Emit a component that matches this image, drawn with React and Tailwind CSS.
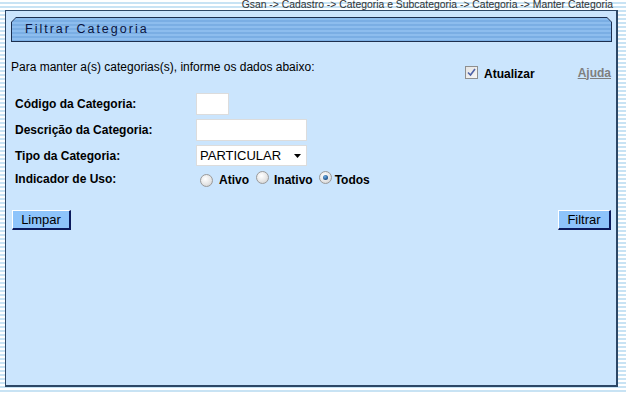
import React from "react";

function Radio({ checked }) {
  return (
    <span className="relative inline-block w-[13px] h-[13px] rounded-full border border-[#9a9a9a] bg-[radial-gradient(circle_at_40%_35%,#ffffff_0%,#e6e6e6_55%,#c9c9c9_100%)] shrink-0">
      {checked && (
        <span className="absolute left-[3px] top-[3px] w-[5px] h-[5px] rounded-full bg-[radial-gradient(circle_at_40%_35%,#6fb0e8_0%,#1d4f86_70%,#0d2c52_100%)]" />
      )}
    </span>
  );
}

export default function App() {
  return (
    <div
      className="w-[626px] h-[393px] overflow-hidden bg-[repeating-linear-gradient(to_bottom,#ffffff_0px,#ffffff_2px,#c8e3f4_2px,#c8e3f4_4px)] text-black"
      style={{ fontFamily: '"Liberation Sans", Arial, sans-serif' }}
    >
      <div className="h-[10px] flex justify-end pr-[13px] text-[10.4px] leading-[10px] text-[#333333] whitespace-nowrap">
        Gsan -&gt; Cadastro -&gt; Categoria e Subcategoria -&gt; Categoria -&gt; Manter Categoria
      </div>
      <div className="ml-[5px] w-[613px] h-[377px] bg-[#cbe5fd] border-l border-t border-r-2 border-b-2 border-[#2c4766] flex flex-col">
        {/* title bar */}
        <div className="ml-[5px] mt-[6px] w-[601px] h-[25px] bg-[#1c2f4f] [clip-path:polygon(5px_0,596px_0,601px_5px,601px_25px,0_25px,0_5px)] p-px">
          <div className="w-full h-full [clip-path:polygon(4px_0,595px_0,599px_4px,599px_23px,0_23px,0_4px)] bg-[repeating-linear-gradient(to_bottom,#8dbdee_0px,#8dbdee_2px,#7aaee4_2px,#7aaee4_4px)] flex items-center pl-[13px]">
            <span className="text-[12.5px] tracking-[2px] text-[#0a1440]">Filtrar Categoria</span>
          </div>
        </div>

        {/* intro row */}
        <div className="mt-[18px] h-[22px] flex pl-[5px] pr-[5px]">
          <div className="text-[12px] leading-[14px]">
            Para manter a(s) categorias(s), informe os dados abaixo:
          </div>
          <div className="ml-auto mt-[6px] flex items-center h-[13px]">
            <span className="w-[13px] h-[13px] border border-[#8e8f8f] bg-[linear-gradient(135deg,#e4e4e4,#f6f6f6)] flex items-center justify-center">
              <svg width="9" height="9" viewBox="0 0 9 9">
                <path d="M1 4.5 L3.5 7 L8 1" fill="none" stroke="#4d62a8" strokeWidth="1.6" />
              </svg>
            </span>
            <span className="ml-[6px] text-[12px] font-bold leading-[14px] mt-[2px]">Atualizar</span>
            <span className="ml-[43px] text-[12px] font-bold leading-[14px] text-[#7f7f7f] underline">Ajuda</span>
          </div>
        </div>

        {/* fields */}
        <div className="mt-[11px] pl-[9px] flex flex-col gap-[4px]">
          <div className="h-[22px] flex items-center">
            <div className="w-[181px] text-[12px] font-bold">Código da Categoria:</div>
            <div className="w-[33px] h-[22px] bg-white border border-[#dcdcdc]" />
          </div>
          <div className="h-[22px] flex items-center">
            <div className="w-[181px] text-[12px] font-bold">Descrição da Categoria:</div>
            <div className="w-[111px] h-[22px] bg-white border border-[#dcdcdc]" />
          </div>
          <div className="h-[21px] flex items-center">
            <div className="w-[181px] text-[12px] font-bold">Tipo da Categoria:</div>
            <div className="w-[111px] h-[21px] bg-white border border-[#dcdcdc] flex items-center pl-[3px]">
              <span className="text-[13px] leading-[15px]">PARTICULAR</span>
              <svg className="ml-auto mr-[5px]" width="7" height="4" viewBox="0 0 7 4">
                <path d="M0 0 H7 L3.5 4 Z" fill="#000" />
              </svg>
            </div>
          </div>
          <div className="h-[20px] flex items-center">
            <div className="w-[181px] text-[12px] font-bold self-start">Indicador de Uso:</div>
            <div className="flex items-center pl-[4px] text-[12px] font-bold">
              <Radio />
              <span className="ml-[6px]">Ativo</span>
              <span className="ml-[7px]"><Radio /></span>
              <span className="ml-[5px]">Inativo</span>
              <span className="ml-[6px]"><Radio checked /></span>
              <span className="ml-[3px]">Todos</span>
            </div>
          </div>
        </div>

        {/* buttons */}
        <div className="mt-[20px] flex justify-between pl-[6px] pr-[5px]">
          <button className="w-[59px] h-[20px] bg-[#8ec4fb] border-t border-l border-t-white border-l-white border-r-2 border-b-2 border-r-[#0b1a5c] border-b-[#0b1a5c] text-[13px] leading-[15px] text-black flex items-center justify-center">
            Limpar
          </button>
          <button className="w-[53px] h-[20px] bg-[#8ec4fb] border-t border-l border-t-white border-l-white border-r-2 border-b-2 border-r-[#0b1a5c] border-b-[#0b1a5c] text-[13px] leading-[15px] text-black flex items-center justify-center">
            Filtrar
          </button>
        </div>
      </div>
    </div>
  );
}
